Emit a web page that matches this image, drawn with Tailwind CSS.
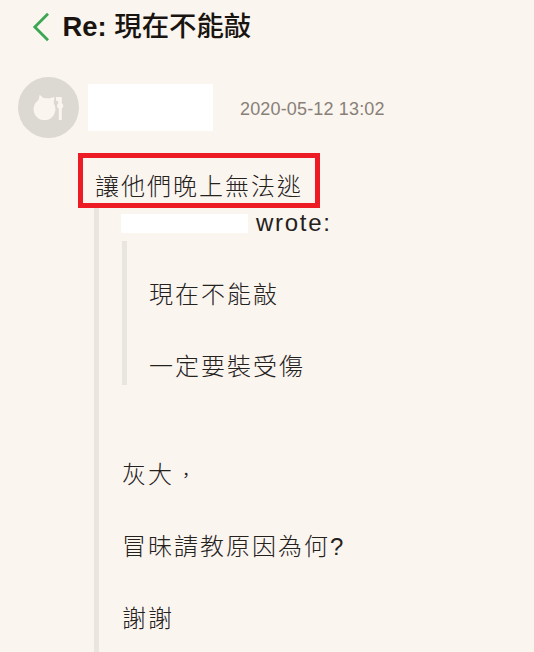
<!DOCTYPE html>
<html lang="zh-Hant">
<head>
<meta charset="utf-8">
<title>Re: 現在不能敲</title>
<script src="https://cdn.jsdelivr.net/npm/@tailwindcss/browser@4"></script>
</head>
<body class="h-[652px] w-[534px] overflow-hidden bg-[#faf5ef] font-['Liberation_Sans','Noto_Sans_CJK_TC',sans-serif] text-[#25211d]">
<main class="flex h-full flex-col">
  <header class="flex h-[53px] shrink-0 items-center pl-8">
    <svg class="h-8 w-[18px]" viewBox="0 0 18 32" fill="none" stroke="#3ba653" stroke-width="2.8"><path d="M16 2.700 2.800 16 16 29.300"/></svg>
    <h1 class="ml-[12.5px] flex text-[27.4px] leading-[53px] whitespace-pre text-[#19140f]"><span class="font-bold">Re: </span><span class="font-medium">現在不能敲</span></h1>
  </header>
  <section class="flex h-[100px] shrink-0 items-start pt-6 pl-[18px]">
    <svg class="size-[61px]" viewBox="0 0 61 61"><circle cx="30.5" cy="30.5" r="30.5" fill="#dcd8d2"/><g fill="#faf5ef"><circle cx="26.5" cy="32.2" r="10.900"/><path d="M20 25 21.700 17.700 26 21.500H30.500L36.500 20 35.500 27ZM38 20H43.800V26.300A3 3 0 0 1 43.800 31.500V43H40.800V31.500A3 3 0 0 1 40.300 26.300V24.500L38 23.500Z"/></g></svg>
    <div class="mt-[7px] ml-[9px] h-[47px] w-[125px] bg-white"></div>
    <time class="mt-[20px] ml-[27px] text-[18px] leading-6 tracking-[0.16px] text-[#888078]">2020-05-12 13:02</time>
  </section>
  <article class="flex min-h-0 grow flex-col text-2xl leading-9 font-light tracking-[2px] whitespace-nowrap">
    <div class="ml-[78px] h-[55px] w-[242px] shrink-0 border-5 border-[#ed1c24] pt-[11px] pl-3">讓他們晚上無法逃</div>
    <blockquote class="ml-[94px] grow border-l-5 border-[#e9e5df] pl-[22px]">
      <div class="flex h-[33px] items-start"><span class="mt-[6px] mr-2 h-[19px] w-[127px] bg-white"></span><span class="-mt-[3px] tracking-[1.7px]">wrote:</span></div>
      <blockquote class="ml-px h-36 border-l-5 border-[#e9e5df] pt-[36px] pl-[22px]">
        <p class="mb-9">現在不能敲</p>
        <p>一定要裝受傷</p>
      </blockquote>
      <div class="mt-[72px] ml-px flex flex-col gap-9">
        <p class="flex h-9">灰大<span class="w-[26px] pt-px pl-[4px] text-base leading-9 font-normal">，</span></p>
        <p>冒昧請教原因為何?</p>
        <p>謝謝</p>
      </div>
    </blockquote>
  </article>
</main>
</body>
</html>
